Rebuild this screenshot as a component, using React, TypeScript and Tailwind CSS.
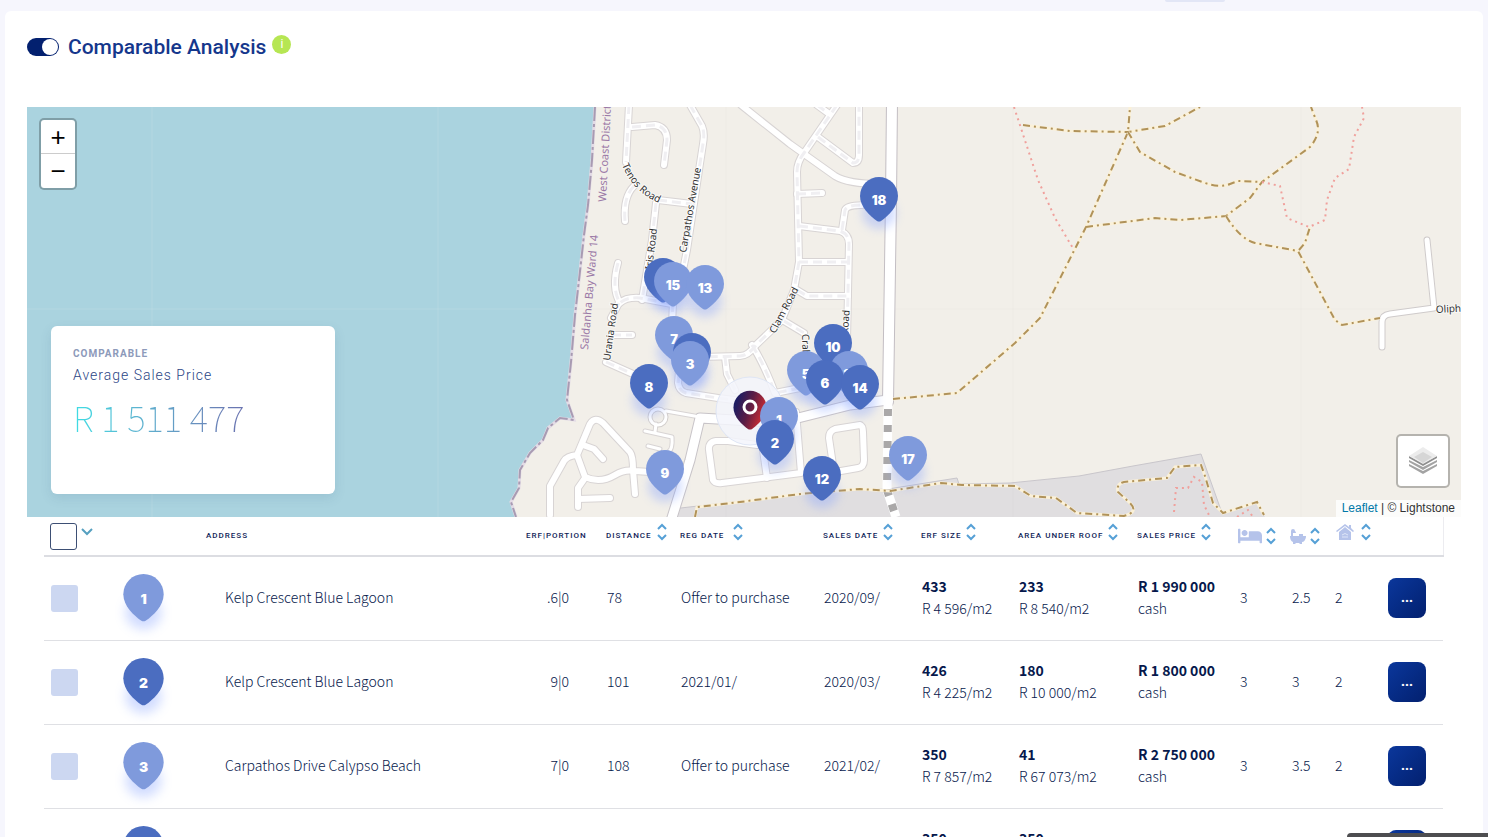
import React, { useState } from 'react';
import { FaBed } from 'react-icons/fa';

interface Sale {
  id: number;
  address: string;
  erf: string;
  distance: string;
  regDate: string;
  salesDate: string;
  erfSize: string;
  erfRate: string;
  roofArea: string;
  roofRate: string;
  price: string;
  payment: string;
  beds: string;
  baths: string;
  garages: string;
}

interface MapPin {
  label: string;
  x: number;
  y: number;
  dark?: boolean;
}

const sales: Sale[] = [
  { id: 1, address: 'Kelp Crescent Blue Lagoon', erf: '.6|0', distance: '78', regDate: 'Offer to purchase', salesDate: '2020/09/', erfSize: '433', erfRate: 'R 4 596/m2', roofArea: '233', roofRate: 'R 8 540/m2', price: 'R 1 990 000', payment: 'cash', beds: '3', baths: '2.5', garages: '2' },
  { id: 2, address: 'Kelp Crescent Blue Lagoon', erf: '9|0', distance: '101', regDate: '2021/01/', salesDate: '2020/03/', erfSize: '426', erfRate: 'R 4 225/m2', roofArea: '180', roofRate: 'R 10 000/m2', price: 'R 1 800 000', payment: 'cash', beds: '3', baths: '3', garages: '2' },
  { id: 3, address: 'Carpathos Drive Calypso Beach', erf: '7|0', distance: '108', regDate: 'Offer to purchase', salesDate: '2021/02/', erfSize: '350', erfRate: 'R 7 857/m2', roofArea: '41', roofRate: 'R 67 073/m2', price: 'R 2 750 000', payment: 'cash', beds: '3', baths: '3.5', garages: '2' },
  { id: 4, address: '', erf: '', distance: '', regDate: '', salesDate: '', erfSize: '350', erfRate: '', roofArea: '350', roofRate: '', price: '', payment: '', beds: '', baths: '', garages: '' },
];

// sorted north to south so that southern pins overlap northern ones
const pins: MapPin[] = [
  { label: '18', x: 879, y: 222, dark: true },
  { label: '16', x: 663, y: 303, dark: true },
  { label: '15', x: 673, y: 307 },
  { label: '13', x: 705, y: 310 },
  { label: '7', x: 674, y: 361 },
  { label: '10', x: 833, y: 369, dark: true },
  { label: '4', x: 692, y: 378, dark: true },
  { label: '3', x: 690, y: 386 },
  { label: '5', x: 806, y: 396 },
  { label: '11', x: 849, y: 396 },
  { label: '6', x: 825, y: 405, dark: true },
  { label: '8', x: 649, y: 409, dark: true },
  { label: '14', x: 860, y: 410, dark: true },
  { label: '1', x: 779, y: 442 },
  { label: '2', x: 775, y: 465, dark: true },
  { label: '17', x: 908, y: 481 },
  { label: '9', x: 665, y: 495 },
  { label: '12', x: 822, y: 501, dark: true },
];

const COAST = 'M595 107L592 160L588 205L584 235L579 280L575 315L571 362L567 400L574 420L560 418L548 428L543 440L530 453L520 470L519 488L511 502L516 517';
const RESERVE_EDGE = 'M672 509L820 492L888 489L957 478L959 484L1010 483L1079 476L1133 466L1201 454L1222 513';

// residential streets with a dashed centre
const dashedStreets = [
  'M629 105L626 162',
  'M632 127L655 125Q667 127 667 140L664 165',
  'M690 105L702 126Q705 133 703 144L699 170L687 250L681 280',
  'M658 200L692 204',
  'M634 186Q623 197 625 221',
  'M656 203L652 240L642 300',
  'M618 263Q611 288 620 303Q626 297 640 298L672 304',
  'M619 303L611 318',
  'M606 362L642 378',
  'M612 335L632 335',
  'M837 105L804 153Q797 162 797 172L799 262L794 290L782 320L756 345Q748 356 740 356L700 357',
  'M725 357L727 374L735 390',
  'M752 345Q764 364 775 393L800 388L840 378',
  'M784 321L804 333',
  'M817 105L828 113',
  'M818 137L853 163Q859 163 859 155L859 105',
  'M797 194L822 193',
  'M799 226L840 231Q849 234 849 244L847 340',
  'M842 230L845 210Q848 203 875 206',
  'M799 262L848 262',
  'M797 290L807 296L848 296',
  'M673 303L671 345',
  'M680 360L678 383Q679 391 686 393L718 398L750 402',
];

const plainStreets = [
  'M741 105L790 144L835 176Q848 184 880 184',
  'M550 515L550 486L564 461Q567 456 577 455L590 424Q595 416 603 423L630 452Q633 456 633 470L635 494',
  'M577 455L585 477Q600 484 615 475Q625 469 635 471L650 472',
  'M585 478L578 488L578 507',
  'M578 499L610 498',
  'M583 445L594 449L603 459',
  'M757 445L728 441L716 441Q708 442 709 450L713 480Q715 484 722 483L801 473L796 412',
  'M763 450L767 478',
  'M860 425L835 429Q829 431 829 438L833 465Q834 472 841 471L858 468Q864 467 864 460L863 432Q863 426 860 425',
];

const thinStreets = [
  'M666 411L700 417',
  'M656 424L655 432M645 431L672 437Q673 450 668 452M648 446L660 449',
];

const tracks = [
  'M695 517L697 507L740 502L800 494L860 489L890 491L941 483L962 485L1015 486L1031 496L1056 498L1077 513L1124 516Q1139 512 1130 503L1118 492Q1116 484 1124 482L1167 478L1175 467L1201 465L1205 476L1213 503L1223 513L1257 502L1264 515',
  'M893 399L957 393L1015 343L1040 318L1086 227L1128 132L1130 107',
  'M1023 125L1070 131L1128 132L1165 126L1200 107',
  'M1128 132L1140 152L1175 172L1205 183Q1220 188 1230 184L1238 181L1262 182',
  'M1086 227L1155 218L1180 220L1226 216L1250 198L1262 182L1310 147Q1322 133 1316 120L1311 107',
  'M1226 216Q1240 239 1255 243L1298 251L1335 320L1342 325L1380 318',
  'M1299 250L1305 243L1310 227',
];

const footpaths = [
  'M1014 107L1038 180L1055 218L1074 250',
  'M1262 182L1280 186L1287 218L1309 227L1325 220L1327 200L1335 178L1349 169L1354 137L1364 118L1362 107',
  'M1174 512L1176 488L1188 488L1194 477L1202 482L1204 505L1210 517',
  'M1237 517L1248 510L1253 517',
];

const PIN_PATH = 'M-19 -26A19 19 0 0 1 19 -26C19 -15 9 -6 2 -1Q0 0 -2 -1C-9 -6 -19 -15 -19 -26Z';

const PinShape = ({ label, dark }: { label: string; dark?: boolean }) => (
  <>
    <ellipse cx="0" cy="-9" rx="17" ry="16" fill="#7f9dff" opacity="0.35" filter="url(#pin-glow)" />
    <path d={PIN_PATH} fill={dark ? '#4b6dc0' : '#7f9adc'} />
    <text x="0" y="-17" textAnchor="middle" fill="#fff" className="font-['Inter'] text-[13px] font-black">
      {label}
    </text>
  </>
);

const Street = ({ d, width, color }: { d: string; width: number; color: string }) => (
  <path d={d} fill="none" stroke={color} strokeWidth={width} strokeLinecap="round" strokeLinejoin="round" />
);

const AreaMap = () => (
  <svg viewBox="27 107 1434 410" preserveAspectRatio="xMidYMid slice" className="h-full w-full" role="img" aria-label="Map of comparable sales">
    <defs>
      <filter id="pin-glow" x="-60%" y="-60%" width="220%" height="240%">
        <feGaussianBlur stdDeviation="5" />
      </filter>
      <linearGradient id="subject" x1="0" y1="0.2" x2="1" y2="0.6">
        <stop offset="0.1" stopColor="#1d1c62" />
        <stop offset="0.5" stopColor="#5c1d44" />
        <stop offset="0.9" stopColor="#c42a33" />
      </linearGradient>
      <path id="tenos" d="M622 165Q634 194 662 204" />
    </defs>

    <rect x="27" y="107" width="1434" height="410" fill="#f2efe9" />
    <path d={`${COAST}L27 517L27 107Z`} fill="#aad3df" />
    <path d={`${RESERVE_EDGE}L1257 502L1265 517L670 517Z`} fill="#e0dee0" />
    <path d={RESERVE_EDGE} fill="none" stroke="#c9c6cb" />
    <path d="M152 107V517M438 107V517M27 309H575" stroke="#fff" strokeOpacity="0.12" />
    <path d="M726 107V517M1013 107V517M1301 107V517M575 309H1461" stroke="#000" strokeOpacity="0.02" />
    <path d={COAST} fill="none" stroke="#e3dbe6" strokeWidth="3" />
    <path d={COAST} fill="none" stroke="#a89bb2" strokeWidth="2" strokeDasharray="14 3 3 3" />

    {/* street casings first, so that junctions stay open */}
    {dashedStreets.map((d) => <Street key={d} d={d} width={8} color="#d8d4d4" />)}
    {plainStreets.map((d) => <Street key={d} d={d} width={8} color="#d8d4d4" />)}
    {thinStreets.map((d) => <Street key={d} d={d} width={5} color="#d8d4d4" />)}
    <circle cx="658" cy="417" r="8" fill="none" stroke="#d3cfcd" strokeWidth="5" />
    <Street d="M892 100L891 200L888 402" width={12} color="#c3bec3" />
    <Street d="M888 400L850 405L790 420L770 422L700 418L690 460L670 524" width={11} color="#c8c4c8" />
    {dashedStreets.map((d) => <Street key={d} d={d} width={6} color="#fff" />)}
    {plainStreets.map((d) => <Street key={d} d={d} width={6} color="#fff" />)}
    {thinStreets.map((d) => <Street key={d} d={d} width={3} color="#fff" />)}
    <circle cx="658" cy="417" r="8" fill="none" stroke="#fff" strokeWidth="3" />
    {dashedStreets.map((d) => (
      <path key={d} d={d} fill="none" stroke="#f0eff2" strokeWidth="3" strokeDasharray="9 5" />
    ))}
    <Street d="M892 100L891 200L888 402" width={10} color="#fff" />
    <Street d="M888 400L850 405L790 420L770 422L700 418L690 460L670 524" width={9} color="#fff" />
    <path d="M888 404L887 490L896 517" fill="none" stroke="#fff" strokeWidth="9" />
    <path d="M888 409L887 490L896 517" fill="none" stroke="#aaa8a8" strokeWidth="8" strokeDasharray="7 9" />
    <Street d="M1427 240L1434 308L1390 314Q1382 315 1382 322L1382 347" width={7} color="#cfcbcb" />
    <Street d="M1427 240L1434 308L1390 314Q1382 315 1382 322L1382 347" width={5} color="#fff" />

    {tracks.map((d) => (
      <g key={d} fill="none">
        <path d={d} stroke="#fbf1d8" strokeWidth="3" />
        <path d={d} stroke="#b0925a" strokeWidth="2" strokeDasharray="7 4 2 4" />
      </g>
    ))}
    {footpaths.map((d) => (
      <path key={d} d={d} fill="none" stroke="#f0a09c" strokeWidth="2" strokeDasharray="2 4" />
    ))}

    <g className="font-['Noto_Sans'] text-[11px]" fill="#9a78a6">
      <text transform="translate(606 202) rotate(-87)">West Coast District</text>
      <text transform="translate(588 350) rotate(-85)">Saldanha Bay Ward 14</text>
    </g>
    <g className="font-['Noto_Sans'] text-[10px]" fill="#333" stroke="#fff" strokeWidth="2" strokeOpacity="0.6" paintOrder="stroke">
      <text><textPath href="#tenos">Tenos Road</textPath></text>
      <text transform="translate(652 270) rotate(-83)">Iris Road</text>
      <text transform="translate(686 253) rotate(-80)">Carpathos Avenue</text>
      <text transform="translate(610 361) rotate(-82)">Urania Road</text>
      <text transform="translate(775 334) rotate(-62)">Clam Road</text>
      <text transform="translate(802 334) rotate(88)">Crab</text>
      <text transform="translate(848 334) rotate(-86)">Road</text>
      <text transform="translate(1436 313) rotate(-3)">Oliphants</text>
    </g>

    {/* subject property */}
    <circle cx="750" cy="411" r="34" fill="#f3f5fb" fillOpacity="0.85" stroke="#dfe6f5" />
    <path d={PIN_PATH} transform="translate(750 430) scale(.87)" fill="url(#subject)" />
    <circle cx="750" cy="407" r="6" fill="none" stroke="#fff" strokeWidth="3" />

    {pins.map((pin) => (
      <g key={pin.label} transform={`translate(${pin.x} ${pin.y})`}>
        <PinShape label={pin.label} dark={pin.dark} />
      </g>
    ))}
  </svg>
);

const SortArrows = () => (
  <svg viewBox="0 0 12 18" className="h-[18px] w-3 shrink-0" fill="none" stroke="#56a0d6" strokeWidth="2">
    <path d="M2 6L6 2L10 6M2 12L6 16L10 12" />
  </svg>
);

const BathIcon = () => (
  <svg viewBox="0 0 16 16" className="h-4 w-4 shrink-0" fill="#b5c3ea">
    <path d="M1 8V3Q1 1 3 1Q5 1 5 3Q6 4 6 5H3V8H9V6H13V8H16V9Q15 14 12 14V16H10L9 15H6L5 16H3V14Q0 13 0 8Z" />
  </svg>
);

const GarageIcon = () => (
  <svg viewBox="0 0 18 18" className="h-[18px] w-[18px] shrink-0" fill="#b5c3ea">
    <path d="M9 1L0 8L1 9L9 3L17 9L18 8L15 5V2H13V4Z" />
    <path d="M9 4L3 9V17H15V9Z" />
    <path d="M6 12Q9 9 12 12M6 14H12" fill="none" stroke="#dfe6f8" />
  </svg>
);

interface SortHeaderProps {
  label: string;
  wide?: boolean;
}

const SortHeader = ({ label, wide }: SortHeaderProps) => (
  <th className="p-0 text-left font-medium">
    <button className={`flex items-center whitespace-nowrap uppercase tracking-[1px] ${wide ? 'gap-2' : 'gap-1'}`}>
      <span>{label}</span>
      <span className="pb-2"><SortArrows /></span>
    </button>
  </th>
);

const SaleRow = ({ sale }: { sale: Sale }) => (
  <tr className="h-[84px] border-b border-[#dfe0e4] font-light text-[#06184c]">
    <td className="pl-[7px]">
      <input type="checkbox" aria-label={`Select sale ${sale.id}`} className="block h-[27px] w-[27px] appearance-none rounded-[3px] bg-[#ccd7f1] checked:bg-[#4b6dc0]" />
    </td>
    <td className="pl-[6px]">
      <svg viewBox="-20 -46 40 48" className="block h-[51px] w-[43px] overflow-visible">
        <PinShape label={String(sale.id)} dark={sale.id % 2 === 0} />
      </svg>
    </td>
    <td className="pb-[2px] pl-[19px]">{sale.address}</td>
    <td className="pr-[37px] pb-[2px] text-right">{sale.erf}</td>
    <td className="pb-[2px] pl-px">{sale.distance}</td>
    <td className="pb-[2px] pl-px">{sale.regDate}</td>
    <td className="pb-[2px] pl-px">{sale.salesDate}</td>
    <td className="pb-[2px] pl-px">
      <b className="block font-bold">{sale.erfSize}</b>
      <span className="block min-h-[22px]">{sale.erfRate}</span>
    </td>
    <td className="pb-[2px] pl-px">
      <b className="block font-bold">{sale.roofArea}</b>
      <span className="block min-h-[22px]">{sale.roofRate}</span>
    </td>
    <td className="pb-[2px] pl-px">
      <b className="block font-bold">{sale.price}</b>
      <span className="block min-h-[22px]">{sale.payment}</span>
    </td>
    <td className="pb-[2px] pl-[2px]">{sale.beds}</td>
    <td className="pb-[2px] pl-[2px]">{sale.baths}</td>
    <td className="pb-[2px] pl-px">{sale.garages}</td>
    <td className="pl-[6px]">
      <button aria-label="More actions" className="block h-10 w-[38px] rounded-lg bg-linear-to-br from-[#0b379c] to-[#03206f] font-['Roboto',sans-serif] text-[13px] font-black text-white">
        ...
      </button>
    </td>
  </tr>
);

export default function App() {
  const [enabled, setEnabled] = useState(true);

  return (
    <div className="h-screen overflow-hidden bg-[#f6f6fd] px-[5px] pt-[11px] font-['Noto_Sans_CJK_SC','Noto_Sans',sans-serif] text-[#0f2358]">
      <div className="absolute top-0 right-[263px] h-[2px] w-[60px] rounded-b bg-[#e2e6f6]"></div>

      <main className="min-h-full rounded-md bg-white px-[22px] pt-6">
        {/* Title */}
        <div className="flex h-[72px] items-start">
          <label className="flex items-center gap-[9px] font-['Roboto',sans-serif] text-[21px] leading-6 font-medium text-[#15378c]">
            <input
              type="checkbox"
              checked={enabled}
              onChange={(e) => setEnabled(e.target.checked)}
              className="flex h-[18px] w-8 appearance-none items-center rounded-full bg-gray-300 px-px before:h-4 before:w-4 before:rounded-full before:bg-white checked:justify-end checked:bg-[#03206f]"
            />
            Comparable Analysis
          </label>
          <button aria-label="About this section" className="ml-[6px] h-[19px] w-[19px] rounded-full bg-[#b6e653] font-['Roboto',sans-serif] text-[12px] leading-[19px] text-white">
            i
          </button>
        </div>

        {/* Map */}
        <section className="relative h-[410px] overflow-hidden">
          <AreaMap />

          <div className="absolute top-[11px] left-3 flex w-[38px] flex-col divide-y divide-[#ccc] overflow-hidden rounded-[5px] border-2 border-black/25 bg-white bg-clip-padding font-['Liberation_Sans',sans-serif] text-[26px] leading-[34px] text-black">
            <button aria-label="Zoom in" className="h-[34px]">+</button>
            <button aria-label="Zoom out" className="h-[34px]">−</button>
          </div>

          <div className="absolute bottom-[23px] left-6 h-[168px] w-[284px] rounded-md bg-white px-[22px] pt-[21px] font-['Roboto',sans-serif] shadow-[0_4px_12px_rgba(40,80,120,0.12)]">
            <h3 className="text-[10px] leading-[14px] font-bold tracking-[1px] text-[#8d9aba]">COMPARABLE</h3>
            <p className="mt-1 text-[14px] leading-5 font-light tracking-[1px] text-[#2b4585]">Average Sales Price</p>
            <p className="mt-3 w-[176px] bg-linear-to-r from-[#3ddde4] to-[#6a6fae] bg-clip-text font-['Noto_Sans_CJK_SC',sans-serif] text-[35px] leading-[40px] font-thin whitespace-nowrap text-transparent">
              R 1 511 477
            </p>
          </div>

          <button aria-label="Layers" className="absolute right-[11px] bottom-[29px] flex h-[54px] w-[54px] items-center justify-center rounded-[5px] border-2 border-black/25 bg-white bg-clip-padding">
            <svg viewBox="0 0 28 28" className="h-7 w-7">
              <path d="M0 19L14 27L28 19V17L14 24L0 17Z" fill="#a3a3a3" />
              <path d="M0 15L14 23L28 15V13L14 20L0 13Z" fill="#a3a3a3" />
              <path d="M0 11L14 19L28 11V9L14 16L0 9Z" fill="#8f8f8f" />
              <path d="M0 9L14 17L28 9L14 0Z" fill="#ececec" />
              <path d="M5 10L14 5L23 10L14 16Z" fill="#d6d6d6" />
            </svg>
          </button>

          <div className="absolute right-0 bottom-0 bg-white/80 px-[6px] font-['Liberation_Sans',sans-serif] text-[12px] leading-[17px] text-[#333]">
            <a href="#leaflet" className="text-[#0078a8]">Leaflet</a> | © Lightstone
          </div>
        </section>

        {/* Comparable sales */}
        <div className="pr-[18px] pl-[17px]">
          <table className="w-full table-fixed border-collapse text-[14px] leading-[22px] whitespace-nowrap">
            <colgroup>
              <col className="w-[72px]" />
              <col className="w-[90px]" />
              <col className="w-[320px]" />
              <col className="w-[80px]" />
              <col className="w-[74px]" />
              <col className="w-[143px]" />
              <col className="w-[98px]" />
              <col className="w-[97px]" />
              <col className="w-[119px]" />
              <col className="w-[101px]" />
              <col className="w-[52px]" />
              <col className="w-[44px]" />
              <col className="w-[48px]" />
              <col className="w-[61px]" />
            </colgroup>
            <thead>
              <tr className="h-[39px] border-b-2 border-[#dcdde2] font-['Roboto',sans-serif] text-[8px] leading-[18px]">
                <th className="p-0 pl-[6px]">
                  <div className="flex items-start gap-1">
                    <input type="checkbox" aria-label="Select all" className="h-[27px] w-[27px] appearance-none rounded-[3px] border border-[#3d4f74] bg-white" />
                    <button aria-label="Selection options" className="pt-1">
                      <svg viewBox="0 0 12 10" className="h-[10px] w-3" fill="none" stroke="#56a0c0" strokeWidth="2">
                        <path d="M1 2L6 7L11 2" />
                      </svg>
                    </button>
                  </div>
                </th>
                <th className="p-0"></th>
                <th className="p-0 text-left font-medium tracking-[1px]">ADDRESS</th>
                <th className="p-0 text-left font-medium tracking-[1px]">ERF|PORTION</th>
                <SortHeader label="Distance" />
                <SortHeader label="Reg date" wide />
                <SortHeader label="Sales date" />
                <SortHeader label="Erf size" />
                <SortHeader label="Area under roof" />
                <SortHeader label="Sales price" />
                <th className="p-0">
                  <button aria-label="Sort by bedrooms" className="flex items-center gap-[3px]">
                    <FaBed className="h-6 w-6 text-[#b5c3ea]" />
                    <SortArrows />
                  </button>
                </th>
                <th className="p-0">
                  <button aria-label="Sort by bathrooms" className="flex items-center gap-[3px]">
                    <BathIcon />
                    <SortArrows />
                  </button>
                </th>
                <th className="p-0 pl-[2px]">
                  <button aria-label="Sort by garages" className="flex items-center gap-[6px] pb-2">
                    <GarageIcon />
                    <SortArrows />
                  </button>
                </th>
                <th className="border-r border-[#ececf0] p-0"></th>
              </tr>
            </thead>
            <tbody>
              {sales.map((sale) => (
                <SaleRow key={sale.id} sale={sale} />
              ))}
            </tbody>
          </table>
        </div>
      </main>

      <div className="absolute right-0 bottom-0 h-1 w-[141px] rounded-tl bg-[#4d4d50]"></div>
    </div>
  );
}
